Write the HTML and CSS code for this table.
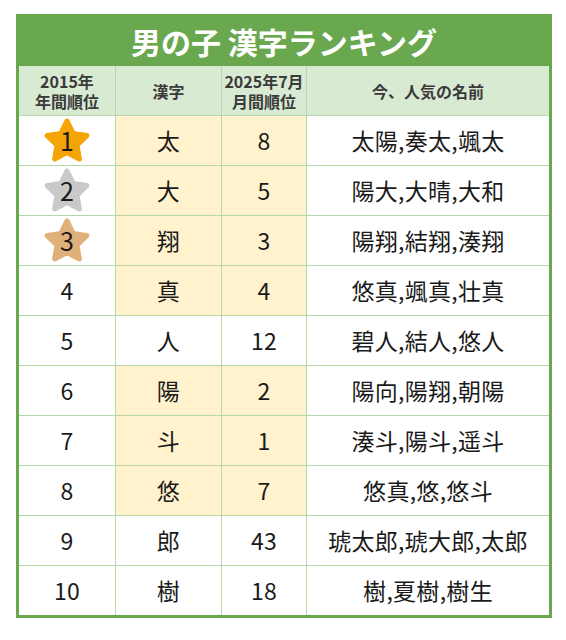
FILE: index.html
```html
<!DOCTYPE html>
<html lang="ja">
<head>
<meta charset="utf-8">
<link rel="stylesheet" href="styles.css">
</head>
<body>
<div class="wrap">
<table class="rank">
  <colgroup>
    <col class="c1"><col class="c2"><col class="c3"><col class="c4">
  </colgroup>
  <thead>
    <tr class="title-row"><th colspan="4" class="title">男の子 漢字ランキング</th></tr>
    <tr class="head-row">
      <th><span class="hl1">2015年</span><span class="hl1">年間順位</span></th>
      <th>漢字</th>
      <th><span class="hl1">2025年7月</span><span class="hl1">月間順位</span></th>
      <th>今、人気の名前</th>
    </tr>
  </thead>
  <tbody>
    <tr><td class="rk"><span class="star gold"><svg viewBox="0 0 48 48"><polygon points="24,4 29.9,15.9 43,17.8 33.5,27.1 35.8,40.2 24,34 12.2,40.2 14.5,27.1 5,17.8 18.1,15.9"/></svg><span class="num">1</span></span></td><td class="hl">太</td><td class="hl">8</td><td>太陽,奏太,颯太</td></tr>
    <tr><td class="rk"><span class="star silver"><svg viewBox="0 0 48 48"><polygon points="24,4 29.9,15.9 43,17.8 33.5,27.1 35.8,40.2 24,34 12.2,40.2 14.5,27.1 5,17.8 18.1,15.9"/></svg><span class="num">2</span></span></td><td class="hl">大</td><td class="hl">5</td><td>陽大,大晴,大和</td></tr>
    <tr><td class="rk"><span class="star bronze"><svg viewBox="0 0 48 48"><polygon points="24,4 29.9,15.9 43,17.8 33.5,27.1 35.8,40.2 24,34 12.2,40.2 14.5,27.1 5,17.8 18.1,15.9"/></svg><span class="num">3</span></span></td><td class="hl">翔</td><td class="hl">3</td><td>陽翔,結翔,湊翔</td></tr>
    <tr><td>4</td><td class="hl">真</td><td class="hl">4</td><td>悠真,颯真,壮真</td></tr>
    <tr><td>5</td><td>人</td><td>12</td><td>碧人,結人,悠人</td></tr>
    <tr><td>6</td><td class="hl">陽</td><td class="hl">2</td><td>陽向,陽翔,朝陽</td></tr>
    <tr><td>7</td><td class="hl">斗</td><td class="hl">1</td><td>湊斗,陽斗,遥斗</td></tr>
    <tr><td>8</td><td class="hl">悠</td><td class="hl">7</td><td>悠真,悠,悠斗</td></tr>
    <tr><td>9</td><td>郎</td><td>43</td><td>琥太郎,琥大郎,太郎</td></tr>
    <tr><td>10</td><td>樹</td><td>18</td><td>樹,夏樹,樹生</td></tr>
  </tbody>
</table>
</div>
</body>
</html>
```
FILE: styles.css
```css
html, body {
  margin: 0;
  padding: 0;
  background: #ffffff;
}
.wrap {
  padding: 14px 0 0 16px;
}
.rank {
  border-collapse: collapse;
  table-layout: fixed;
  width: 533px;
  border: 3px solid #6aa84f;
  font-family: "Noto Sans CJK JP", "Noto Sans", sans-serif;
  color: #1a1a1a;
}
.c1 { width: 98px; }
.c2 { width: 106px; }
.c3 { width: 85px; }
.c4 { width: 244px; }
.rank td, .rank th {
  border: 1px solid #b6d7a8;
  text-align: center;
  vertical-align: middle;
  padding: 0;
  overflow: hidden;
}
.title-row .title {
  height: 48px;
  background: #6aa84f;
  border-color: #6aa84f;
  color: #ffffff;
  font-size: 30px;
  font-weight: 700;
  line-height: 1;
}
.head-row th {
  height: 49px;
  background: #d9ead3;
  color: #3a3a3a;
  font-size: 16px;
  font-weight: 700;
  line-height: 20px;
}
.hl1 {
  display: block;
}
.rank td {
  height: 49px;
  font-size: 23px;
  line-height: 1;
  letter-spacing: 0.3px;
}
.rank td.hl {
  background: #fff2cc;
}
.star {
  position: relative;
  display: block;
  width: 50px;
  height: 46px;
  margin: 0 auto;
}
.star svg {
  width: 50px;
  height: 50px;
  display: block;
  margin-top: -1px;
}
.star polygon {
  stroke-width: 5;
  stroke-linejoin: round;
}
.gold polygon { fill: #f5a406; stroke: #f5a406; }
.silver polygon { fill: #c9c9c9; stroke: #c9c9c9; }
.bronze polygon { fill: #e0b07a; stroke: #e0b07a; }
.star .num {
  position: absolute;
  left: 0;
  right: 0;
  top: 10px;
  text-align: center;
  font-size: 25px;
  line-height: 26px;
  color: #1a1a1a;
}
```
